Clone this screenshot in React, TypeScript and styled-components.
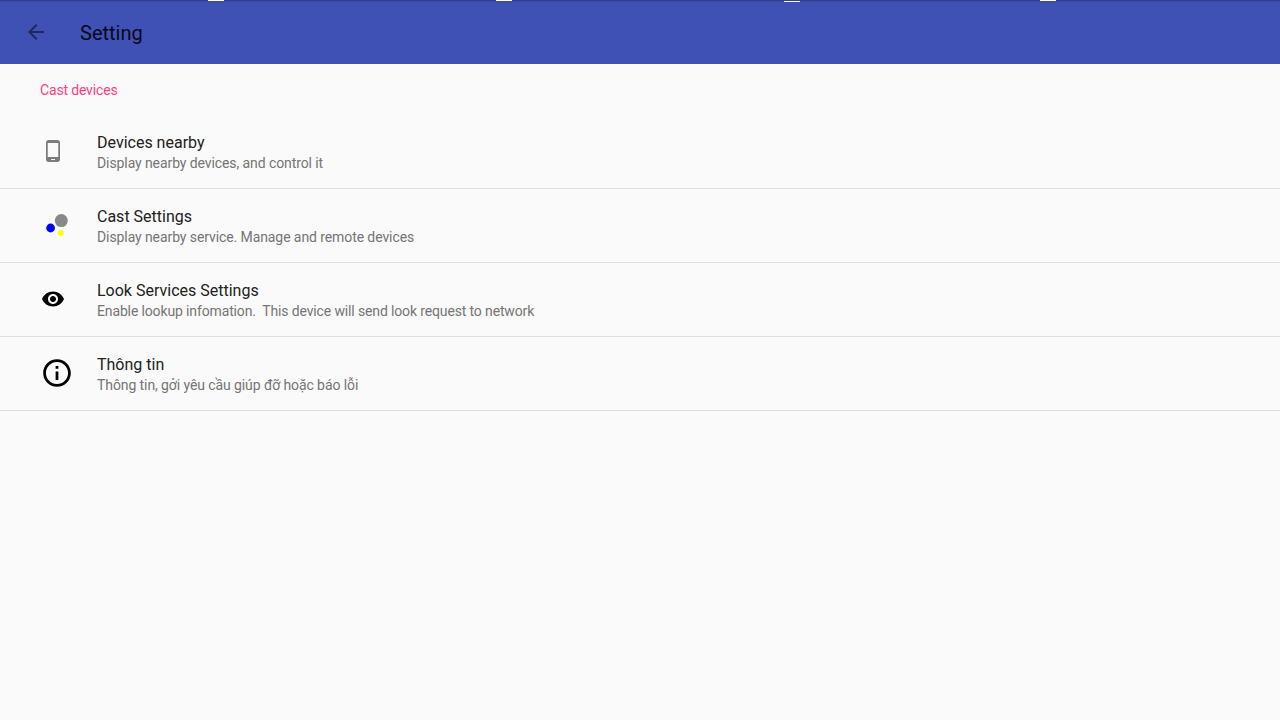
import React from 'react'
import styled, { createGlobalStyle } from 'styled-components'

const GlobalStyle = createGlobalStyle`
  * {
    box-sizing: border-box;
  }
  body {
    margin: 0;
    background: #fafafa;
    font-family: Roboto, sans-serif;
  }
`

const Screen = styled.main`
  position: relative;
  min-height: 720px;
  overflow: hidden;
`

const StatusMark = styled.span<{ $left: number; $top?: number }>`
  position: absolute;
  top: ${({ $top = 0 }) => $top}px;
  left: ${({ $left }) => $left}px;
  width: 16px;
  height: 1px;
  background: #fff;
`

const AppBar = styled.header`
  display: flex;
  align-items: center;
  height: 64px;
  padding: 0 24px;
  background: linear-gradient(#303d88 0, #303d88 1px, #3a4ba6 1px, #3f51b5 4px);
`

const BackButton = styled.button`
  display: flex;
  width: 24px;
  height: 24px;
  margin: 0 32px 0 0;
  padding: 0;
  border: 0;
  background: none;
`

const Title = styled.h1`
  margin: 0;
  padding-top: 2px;
  font-size: 20px;
  font-weight: 400;
  line-height: 24px;
  color: #080a17;
`

const Category = styled.h2`
  margin: 0;
  padding: 16px 40px 0;
  height: 51px;
  font-size: 14px;
  font-weight: 400;
  line-height: 20px;
  letter-spacing: -0.16px;
  color: #ff4081;
`

const List = styled.ul`
  margin: 0;
  padding: 0;
  list-style: none;
`

const Row = styled.li`
  display: flex;
  align-items: center;
  height: 74px;
  padding-left: 40px;
  border-bottom: 1px solid #dedede;
`

const IconFrame = styled.div`
  display: flex;
  align-items: center;
  width: 57px;
  height: 34px;
  margin-bottom: 1px;
`

const SmallIcon = styled.svg`
  width: 24px;
  height: 24px;
  margin-left: 1px;
`

const RowText = styled.div`
  padding-top: 2px;
`

const RowTitle = styled.div`
  font-size: 16px;
  line-height: 21px;
  color: #212121;
`

const Summary = styled.div<{ $spacing?: number }>`
  font-size: 14px;
  line-height: 20px;
  letter-spacing: ${({ $spacing = -0.09 }) => $spacing}px;
  color: #757575;
  white-space: pre;
`

const PhoneIcon = () => (
  <SmallIcon viewBox="0 0 24 24" fill="#7c7c7c">
    <path d="M16.500 1h-9C6.100 1 5 2.100 5 3.500v17C5 21.900 6.100 23 7.500 23h9c1.400 0 2.500-1.100 2.500-2.500v-17C19 2.100 17.900 1 16.500 1zM14 21h-4v-1h4v1zm3.250-3H6.750V4h10.500v14z" />
  </SmallIcon>
)

const DotsIcon = () => (
  <svg width="34" height="34" viewBox="0 0 34 34">
    <circle cx="10.600" cy="20" r="4.400" fill="#00f" />
    <circle cx="21.300" cy="12.600" r="6.500" fill="#888" />
    <circle cx="20.700" cy="25" r="2.900" fill="#ff0" />
  </svg>
)

const EyeIcon = () => (
  <SmallIcon viewBox="0 0 24 24">
    <path d="M12 4.500C7 4.500 2.730 7.610 1 12c1.730 4.390 6 7.500 11 7.500s9.270-3.110 11-7.500c-1.730-4.390-6-7.500-11-7.500zM12 17c-2.760 0-5-2.240-5-5s2.240-5 5-5 5 2.240 5 5-2.240 5-5 5zm0-8c-1.660 0-3 1.340-3 3s1.340 3 3 3 3-1.340 3-3-1.340-3-3-3z" />
  </SmallIcon>
)

const InfoIcon = () => (
  <svg width="34" height="34" viewBox="-0.300 -0.300 24.600 24.600">
    <path d="M11 17h2v-6h-2v6zm1-15C6.480 2 2 6.480 2 12s4.480 10 10 10 10-4.480 10-10S17.520 2 12 2zm0 18c-4.410 0-8-3.590-8-8s3.590-8 8-8 8 3.590 8 8-3.590 8-8 8zM11 9h2V7h-2v2z" />
  </svg>
)

const items = [
  { icon: <PhoneIcon />, title: 'Devices nearby', summary: 'Display nearby devices, and control it' },
  { icon: <DotsIcon />, title: 'Cast Settings', summary: 'Display nearby service. Manage and remote devices' },
  {
    icon: <EyeIcon />,
    title: 'Look Services Settings',
    summary: 'Enable lookup infomation.  This device will send look request to network',
    spacing: -0.137,
  },
  { icon: <InfoIcon />, title: 'Thông tin', summary: 'Thông tin, gởi yêu cầu giúp đỡ hoặc báo lỗi' },
]

const App: React.FC = () => {
  return (
    <Screen>
      <GlobalStyle />
      <AppBar>
        <BackButton aria-label="Back">
          <svg width="24" height="24" viewBox="0 0 24 24" fill="#1f285a">
            <path d="M20 11H7.830l5.590-5.590L12 4l-8 8 8 8 1.410-1.410L7.830 13H20v-2z" />
          </svg>
        </BackButton>
        <Title>Setting</Title>
      </AppBar>
      <StatusMark $left={208} />
      <StatusMark $left={496} />
      <StatusMark $left={784} $top={1} />
      <StatusMark $left={1040} />
      <Category>Cast devices</Category>
      <List>
        {items.map(({ icon, title, summary, spacing }) => (
          <Row key={title}>
            <IconFrame>{icon}</IconFrame>
            <RowText>
              <RowTitle>{title}</RowTitle>
              <Summary $spacing={spacing}>{summary}</Summary>
            </RowText>
          </Row>
        ))}
      </List>
    </Screen>
  )
}

export default App
